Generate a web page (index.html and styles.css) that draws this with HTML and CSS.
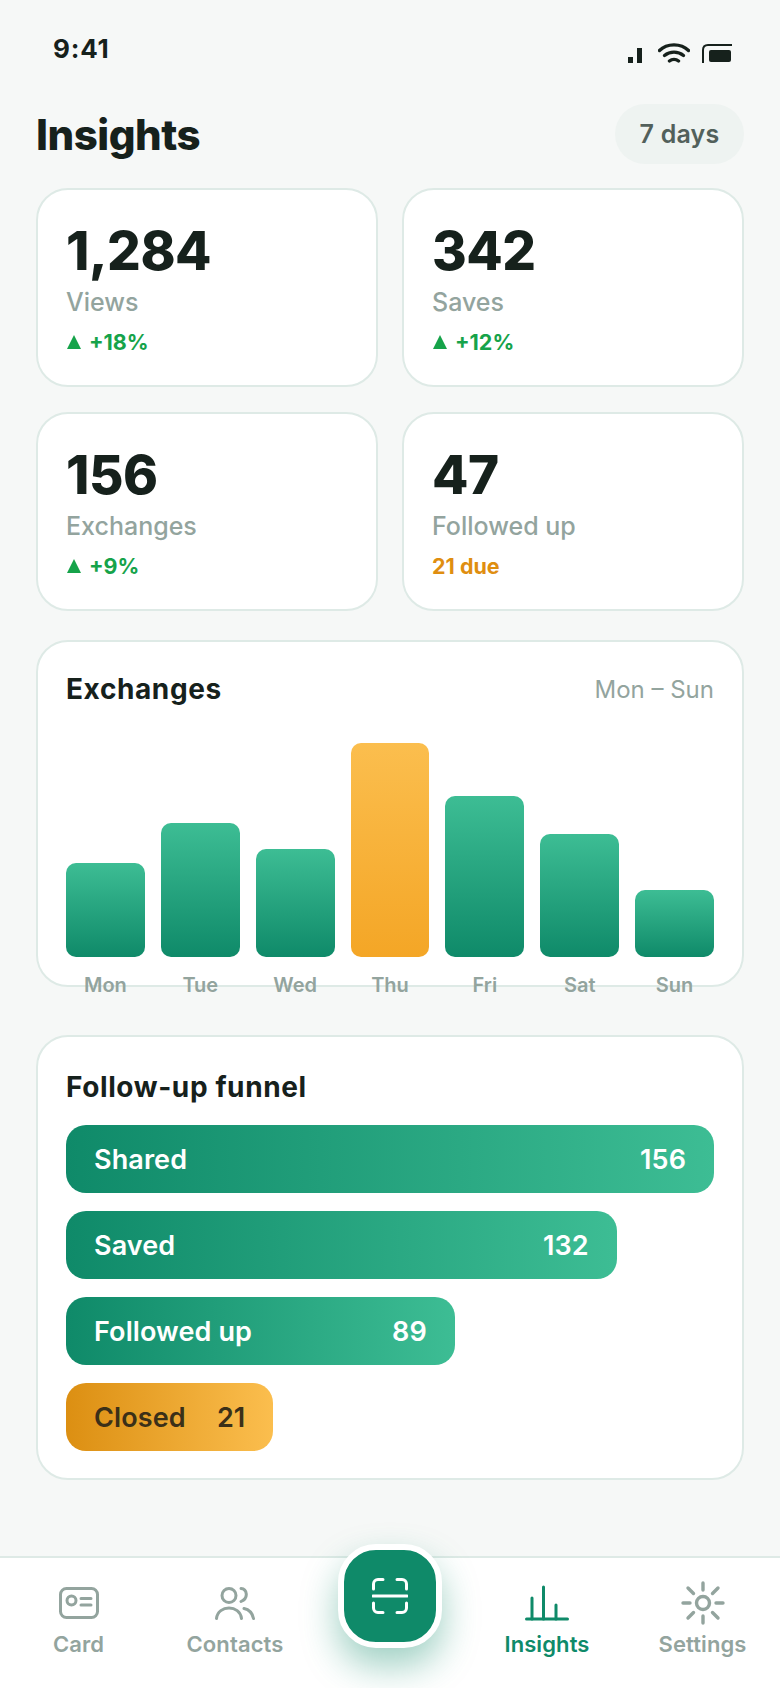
FILE: index.html
```html
<!DOCTYPE html>
<html lang="en">
<head>
    <meta charset="UTF-8">
    <meta name="viewport" content="width=device-width, initial-scale=1.0">
    <title>Insights</title>
    <link rel="stylesheet" href="styles.css">
</head>
<body>
    <div class="app">
        <div class="status-bar">
            <span class="time">9:41</span>
            <div class="status-icons">
                <svg class="signal" width="14" height="15" viewBox="0 0 14 15"><rect x="0" y="9" width="5" height="6" fill="#16211c"/><rect x="9" y="0" width="5" height="15" fill="#16211c"/></svg>
                <svg width="32" height="20" viewBox="0 0 32 20" fill="none" stroke="#16211c" stroke-width="3.4" stroke-linecap="round"><path d="M1.500 7.500C9 0 23 0 30.500 7.500"/><path d="M6.500 12.500C12 8 20 8 25.500 12.500"/><path d="M11.500 18C14 16 18 16 20.500 18"/></svg>
                <svg width="30" height="19" viewBox="0 0 30 19" fill="none"><path d="M1 19V6C1 3 3 1 6 1H30" stroke="#16211c" stroke-width="2"/><rect x="7" y="6" width="22" height="12" rx="2" fill="#16211c"/></svg>
            </div>
        </div>

        <main class="content">
            <header class="page-header">
                <h1>Insights</h1>
                <span class="range-chip">7 days</span>
            </header>

            <section class="stat-grid">
                <div class="card stat-card">
                    <div class="stat-value">1,284</div>
                    <div class="stat-label">Views</div>
                    <div class="stat-change"><span class="arrow"></span>+18%</div>
                </div>
                <div class="card stat-card">
                    <div class="stat-value">342</div>
                    <div class="stat-label">Saves</div>
                    <div class="stat-change"><span class="arrow"></span>+12%</div>
                </div>
                <div class="card stat-card">
                    <div class="stat-value">156</div>
                    <div class="stat-label">Exchanges</div>
                    <div class="stat-change"><span class="arrow"></span>+9%</div>
                </div>
                <div class="card stat-card">
                    <div class="stat-value">47</div>
                    <div class="stat-label">Followed up</div>
                    <div class="stat-change due">21 due</div>
                </div>
            </section>

            <section class="card chart-card">
                <div class="card-head">
                    <h2>Exchanges</h2>
                    <span class="card-note">Mon – Sun</span>
                </div>
                <div class="bars">
                    <div class="bar-col"><div class="bar" style="height: 94px"></div><span>Mon</span></div>
                    <div class="bar-col"><div class="bar" style="height: 134px"></div><span>Tue</span></div>
                    <div class="bar-col"><div class="bar" style="height: 108px"></div><span>Wed</span></div>
                    <div class="bar-col"><div class="bar peak" style="height: 214px"></div><span>Thu</span></div>
                    <div class="bar-col"><div class="bar" style="height: 161px"></div><span>Fri</span></div>
                    <div class="bar-col"><div class="bar" style="height: 123px"></div><span>Sat</span></div>
                    <div class="bar-col"><div class="bar" style="height: 67px"></div><span>Sun</span></div>
                </div>
            </section>

            <section class="card funnel-card">
                <h2>Follow-up funnel</h2>
                <div class="funnel">
                    <div class="funnel-row" style="width: 100%"><span>Shared</span><span>156</span></div>
                    <div class="funnel-row" style="width: 85%"><span>Saved</span><span>132</span></div>
                    <div class="funnel-row" style="width: 60%"><span>Followed up</span><span>89</span></div>
                    <div class="funnel-row closed" style="width: 32%"><span>Closed</span><span>21</span></div>
                </div>
            </section>
        </main>

        <nav class="tab-bar">
            <a class="tab">
                <div class="tab-icon"><svg width="40" height="32" viewBox="0 0 40 32" fill="none" stroke="#93a49e" stroke-width="3" stroke-linecap="round"><rect x="1.500" y="1.500" width="37" height="29" rx="6"/><circle cx="12.500" cy="13.500" r="4.500"/><path d="M22 11.500H32M22 18H32"/></svg></div>
                <span>Card</span>
            </a>
            <a class="tab">
                <div class="tab-icon"><svg width="40" height="33" viewBox="0 0 40 33" fill="none" stroke="#93a49e" stroke-width="3" stroke-linecap="round"><circle cx="14" cy="8.500" r="7"/><path d="M1.500 31.500C3 17.500 25 17.500 26.500 31.500"/><path d="M26 1.500C32 2 34 11 26 14.500"/><path d="M29 21.500C34 22.500 37.500 26.500 38.500 31.500"/></svg></div>
                <span>Contacts</span>
            </a>
            <div class="tab-spacer"></div>
            <a class="tab active">
                <div class="tab-icon"><svg width="44" height="36" viewBox="0 0 44 36" fill="none" stroke="#0f8a69" stroke-width="3" stroke-linecap="round"><path d="M1.500 34H42.500"/><path d="M7 13V34"/><path d="M18.500 2V34"/><path d="M31 20V34"/></svg></div>
                <span>Insights</span>
            </a>
            <a class="tab">
                <div class="tab-icon"><svg width="44" height="44" viewBox="0 0 44 44" fill="none" stroke="#93a49e" stroke-width="3.400" stroke-linecap="round"><circle cx="22" cy="22" r="6.500"/><path d="M22 2V9M22 35V42M2 22H9M35 22H42M7 7L12.500 12.500M31.500 31.500L37 37M37 7L31.500 12.500M12.500 31.500L7 37"/></svg></div>
                <span>Settings</span>
            </a>
            <button class="scan-button">
                <svg width="36" height="36" viewBox="0 0 36 36" fill="none" stroke="#fff" stroke-width="3" stroke-linecap="round"><path d="M1.500 11V6C1.500 3.500 3.500 1.500 6 1.500H11"/><path d="M25 1.500H30C32.500 1.500 34.500 3.500 34.500 6V11"/><path d="M1.500 25V30C1.500 32.500 3.500 34.500 6 34.500H11"/><path d="M25 34.500H30C32.500 34.500 34.500 32.500 34.500 30V25"/><path d="M1 18H35"/></svg>
            </button>
        </nav>
    </div>
</body>
</html>
```

FILE: styles.css
```css
* {
    box-sizing: border-box;
}
body {
    margin: 0;
    background-color: #f6f8f7;
    font-family: Inter, "Noto Sans", sans-serif;
    color: #16211c;
}
h1, h2 {
    margin: 0;
}
.app {
    position: relative;
    height: 1688px;
    display: flex;
    flex-direction: column;
    overflow: hidden;
}
.status-bar {
    height: 104px;
    padding: 34px 48px 0 53px;
    display: flex;
    justify-content: space-between;
    flex-shrink: 0;
}
.time {
    font-size: 26px;
    font-weight: 700;
    line-height: 30px;
    letter-spacing: 0.8px;
}
.status-icons {
    display: flex;
    align-items: flex-end;
    gap: 12px;
    height: 29px;
}
.signal {
    margin-right: 4px;
}
.content {
    flex: 1;
    padding: 0 36px;
}
.page-header {
    height: 60px;
    display: flex;
    justify-content: space-between;
    align-items: center;
}
.page-header h1 {
    font-size: 42px;
    font-weight: 800;
    letter-spacing: -0.5px;
}
.range-chip {
    width: 129px;
    height: 60px;
    border-radius: 30px;
    background: #eef3f1;
    color: #52605b;
    font-size: 25px;
    font-weight: 600;
    letter-spacing: 0.2px;
    display: flex;
    align-items: center;
    justify-content: center;
}
.card {
    background: #fff;
    border: 2px solid #deeae6;
    border-radius: 32px;
}
.stat-grid {
    display: grid;
    grid-template-columns: 1fr 1fr;
    gap: 25px 24px;
    margin-top: 24px;
}
.stat-card {
    height: 199px;
    padding: 30px 28px 0;
}
.stat-value {
    font-size: 53px;
    font-weight: 800;
    line-height: 62px;
    letter-spacing: -0.5px;
}
.stat-label {
    margin-top: 5px;
    font-size: 25px;
    font-weight: 500;
    line-height: 30px;
    color: #93a49e;
}
.stat-change {
    margin-top: 11px;
    font-size: 21.500px;
    font-weight: 700;
    line-height: 28px;
    color: #16a34a;
    display: flex;
    align-items: center;
    gap: 8px;
}
.stat-change.due {
    color: #df8e10;
}
.arrow {
    width: 0;
    height: 0;
    margin-left: 1px;
    border-left: 7px solid transparent;
    border-right: 7px solid transparent;
    border-bottom: 14px solid #16a34a;
}
.card-head {
    display: flex;
    justify-content: space-between;
    align-items: center;
}
.card h2 {
    font-size: 28px;
    font-weight: 700;
    line-height: 34px;
    letter-spacing: 0.6px;
}
.card-note {
    font-size: 24px;
    color: #93a49e;
}
.chart-card {
    height: 347px;
    margin-top: 29px;
    padding: 30px 28px 0;
}
.bars {
    display: flex;
    gap: 16px;
}
.bar-col {
    flex: 1;
    height: 293px;
    display: flex;
    flex-direction: column;
    justify-content: flex-end;
    align-items: stretch;
    gap: 14px;
    text-align: center;
    color: #93a49e;
    font-size: 20px;
    font-weight: 600;
    line-height: 28px;
}
.bar {
    border-radius: 10px;
    background: linear-gradient(to bottom, #3dbd94, #0f8a69);
}
.bar.peak {
    background: linear-gradient(to bottom, #fbbe4e, #f4a626);
}
.funnel-card {
    height: 445px;
    margin-top: 48px;
    padding: 33px 28px 0;
}
.funnel {
    display: flex;
    flex-direction: column;
    gap: 18px;
    margin-top: 21px;
}
.funnel-row {
    height: 68px;
    padding: 0 28px;
    border-radius: 20px;
    background: linear-gradient(to right, #0f8a69, #3dbd94);
    color: #fff;
    font-size: 27px;
    font-weight: 600;
    letter-spacing: 0.1px;
    display: flex;
    align-items: center;
    justify-content: space-between;
}
.funnel-row.closed {
    background: linear-gradient(to right, #dc8f12, #fbbe4e);
    color: #3b3018;
}
.tab-bar {
    position: relative;
    height: 132px;
    flex-shrink: 0;
    background: #fff;
    border-top: 2px solid #deeae6;
    display: grid;
    grid-template-columns: 157px 156px 156px 156px 155px;
}
.tab {
    padding-top: 23px;
    display: flex;
    flex-direction: column;
    align-items: center;
    color: #93a49e;
    font-size: 22px;
    font-weight: 600;
    line-height: 28px;
    letter-spacing: 0.1px;
}
.tab-icon {
    height: 44px;
    margin-bottom: 5px;
    display: flex;
    align-items: center;
}
.tab.active {
    color: #0f8a69;
}
.scan-button {
    position: absolute;
    left: 338px;
    top: -14px;
    width: 104px;
    height: 104px;
    border: 6px solid #fff;
    border-radius: 38px;
    background: #0f8a69;
    box-shadow: 0 18px 36px rgba(15, 138, 105, 0.4);
    display: flex;
    align-items: center;
    justify-content: center;
    padding: 0;
}
```
